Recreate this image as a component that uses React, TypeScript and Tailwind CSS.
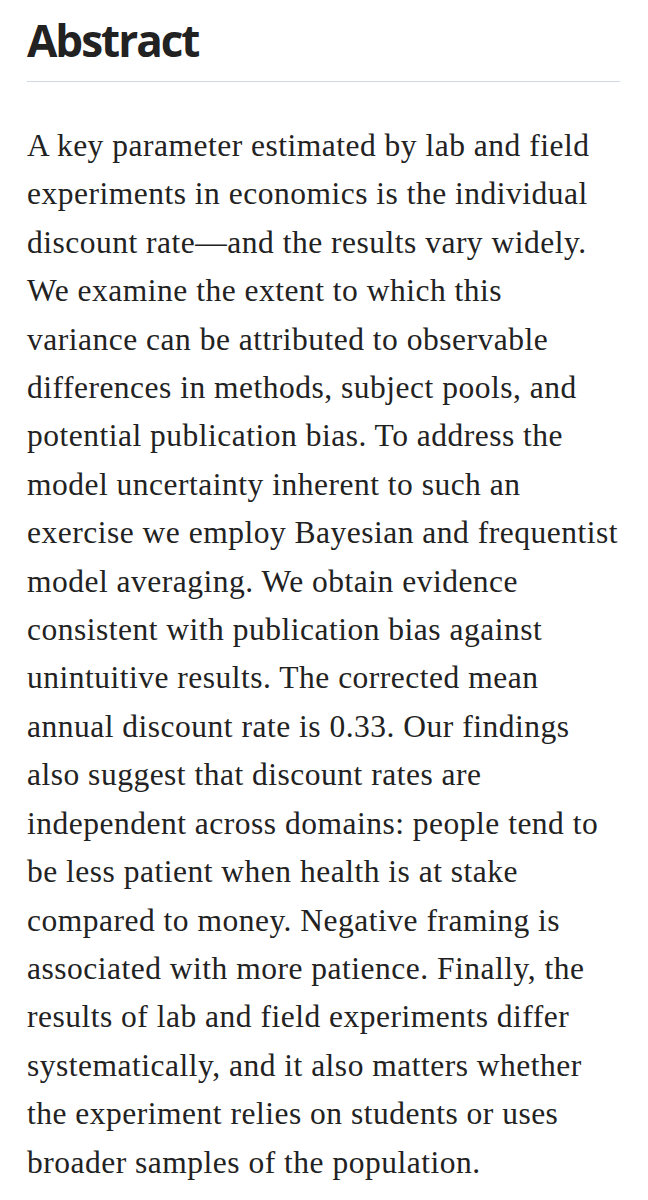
const lines = [
  "A key parameter estimated by lab and field",
  "experiments in economics is the individual",
  "discount rate\u2014and the results vary widely.",
  "We examine the extent to which this",
  "variance can be attributed to observable",
  "differences in methods, subject pools, and",
  "potential publication bias. To address the",
  "model uncertainty inherent to such an",
  "exercise we employ Bayesian and frequentist",
  "model averaging. We obtain evidence",
  "consistent with publication bias against",
  "unintuitive results. The corrected mean",
  "annual discount rate is 0.33. Our findings",
  "also suggest that discount rates are",
  "independent across domains: people tend to",
  "be less patient when health is at stake",
  "compared to money. Negative framing is",
  "associated with more patience. Finally, the",
  "results of lab and field experiments differ",
  "systematically, and it also matters whether",
  "the experiment relies on students or uses",
  "broader samples of the population.",
];

export default function App() {
  return (
    <div className="min-h-[1200px] w-[648px] bg-white px-[27px] pt-[18px] text-[#222222]">
      <h1 className="font-['Open_Sans',sans-serif] text-[44px] font-bold leading-none tracking-[-2px]">
        Abstract
      </h1>
      <hr className="mt-[19px] w-[593px] border-0 border-t border-[#cfd8e3]" />
      <p className="mt-[40px] whitespace-nowrap font-['Liberation_Serif',serif] text-[31.5px] leading-[48.4px] tracking-[0.5px]">
        {lines.map((line, i) => (
          <span key={i} className="block">
            {line}
          </span>
        ))}
      </p>
    </div>
  );
}
